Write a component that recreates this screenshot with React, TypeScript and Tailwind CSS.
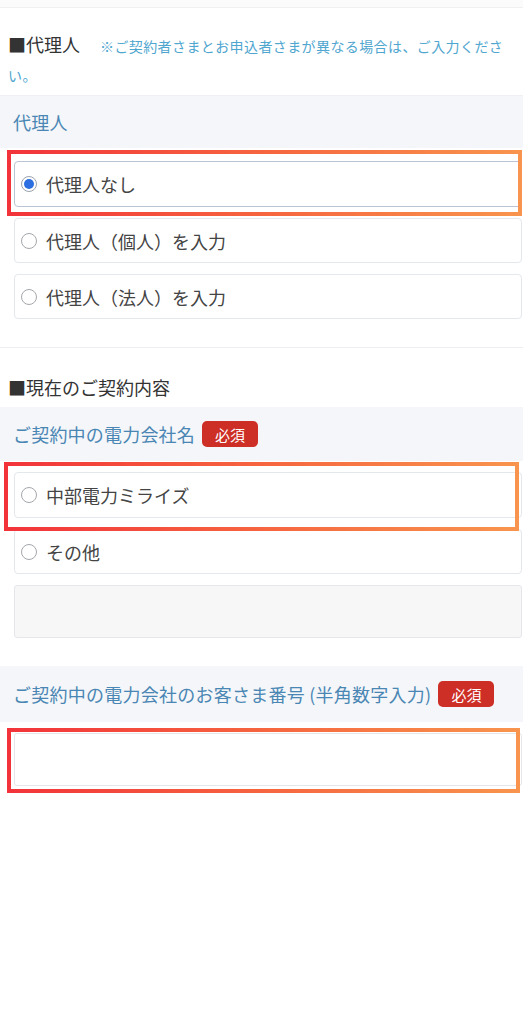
import React from "react";

const font = { fontFamily: '"Noto Sans CJK JP", "Noto Sans", sans-serif' };

function Radio({ checked }: { checked?: boolean }) {
  return checked ? (
    <span className="flex h-[16px] w-[16px] shrink-0 items-center justify-center rounded-full border border-[#9aa3ad] bg-white">
      <span className="h-[10px] w-[10px] rounded-full bg-[#2d6fe0]" />
    </span>
  ) : (
    <span className="h-[16px] w-[16px] shrink-0 rounded-full border border-[#a4a7ab] bg-white" />
  );
}

function Option({ label, checked, h = "h-[45px]" }: { label: string; checked?: boolean; h?: string }) {
  return (
    <div
      className={`flex ${h} items-center gap-[9px] rounded-[4px] border bg-white pl-[6px] ${
        checked ? "border-[#b9c5d2]" : "border-[#e4e7eb]"
      }`}
    >
      <Radio checked={checked} />
      <span className="text-[18px] leading-none text-[#444]">{label}</span>
    </div>
  );
}

function Mark({ cls }: { cls: string }) {
  return (
    <span
      className={`pointer-events-none absolute border-4 border-solid border-transparent [border-image:linear-gradient(90deg,#f2343a,#f6653f_50%,#f8944d)_1] ${cls}`}
    />
  );
}

function Badge() {
  return (
    <span className="ml-[7px] inline-flex h-[26px] items-center rounded-[5px] bg-[#cd2e26] px-[13px] text-[15px] leading-none text-white">
      必須
    </span>
  );
}

export default function App() {
  return (
    <div className="min-h-[1024px] w-[523px] overflow-hidden bg-white" style={font}>
      <div className="h-[7px] bg-[#fbfbfc]" />
      <div className="border-t border-[#eef0f2] pb-[7px] pl-[8px] pr-[14px] pt-[22px] text-[18px] leading-[29px]">
        <span className="mr-[20px] text-[#333]">■代理人</span>
        <span className="text-[14px] leading-[20px] tracking-[0.4px] text-[#4fa6cf]">
          ※ご契約者さまとお申込者さまが異なる場合は、ご入力ください。
        </span>
      </div>

      <div className="flex h-[53px] items-center border-t border-[#eef0f3] bg-[#f4f6f9] pl-[13px]">
        <span className="text-[18px] leading-none tracking-[0.2px] text-[#4a86b4]">代理人</span>
      </div>

      <div className="flex flex-col gap-[11px] pb-[28px] pl-[14px] pr-[1px] pt-[13px]">
        <div className="relative">
          <Option label="代理人なし" checked h="h-[46px]" />
          <Mark cls="-left-[7px] -top-[11px] right-0 -bottom-[9px]" />
        </div>
        <Option label="代理人（個人）を入力" />
        <Option label="代理人（法人）を入力" />
      </div>

      <div className="border-t border-[#eceef1] pb-[5px] pl-[8px] pt-[25px] text-[18px] leading-[29px]">
        <span className="text-[#333]">■現在のご契約内容</span>
      </div>

      <div className="flex h-[54px] items-center bg-[#f4f6f9] pl-[13px]">
        <span className="text-[18px] leading-none tracking-[0.2px] text-[#4a86b4]">ご契約中の電力会社名</span>
        <Badge />
      </div>

      <div className="flex flex-col gap-[11px] pb-[28px] pl-[14px] pr-[1px] pt-[11px]">
        <div className="relative">
          <Option label="中部電力ミライズ" h="h-[46px]" />
          <Mark cls="-left-[10px] -top-[10px] right-[3px] -bottom-[13px]" />
        </div>
        <Option label="その他" />
        <div className="h-[53px] rounded-[3px] border border-[#e4e6e9] bg-[#f7f7f8]" />
      </div>

      <div className="flex h-[56px] items-center bg-[#f4f6f9] pl-[13px]">
        <span className="text-[18px] leading-none tracking-[0.25px] text-[#4a86b4]">
          ご契約中の電力会社のお客さま番号 (半角数字入力)
        </span>
        <Badge />
      </div>

      <div className="pl-[14px] pr-[1px] pt-[11px]">
        <div className="relative">
          <div className="h-[53px] rounded-[3px] border border-[#e4e6e9] bg-white" />
          <Mark cls="-left-[7px] -top-[5px] right-[2px] -bottom-[7px]" />
        </div>
      </div>
    </div>
  );
}
